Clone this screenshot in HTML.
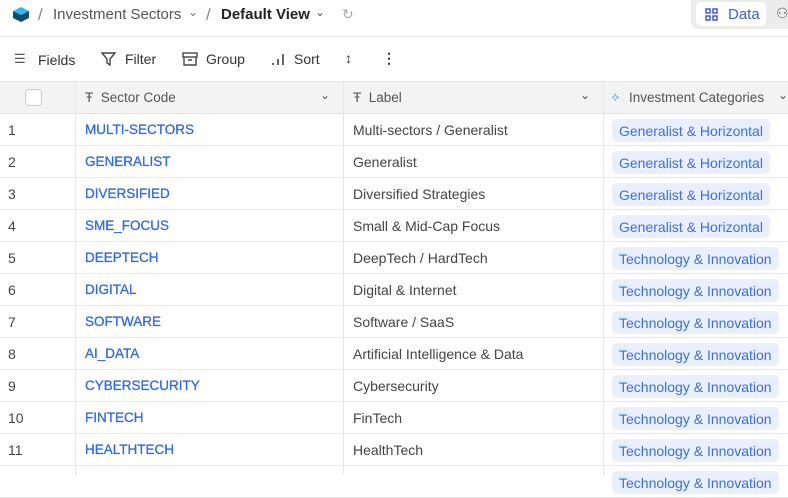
<!DOCTYPE html>
<html><head><meta charset="utf-8"><style>
*{box-sizing:border-box;margin:0;padding:0}
body{width:788px;height:475px;overflow:hidden;background:#fff;font-family:"Liberation Sans",sans-serif;color:#333;position:relative}
.top{position:absolute;left:0;top:0;width:788px;height:37px;border-bottom:1px solid #e6e6e6}
.t{position:absolute;white-space:nowrap}
.tb{position:absolute;top:37px;height:44px;width:788px}
.hdr{position:absolute;top:81px;left:0;width:788px;height:33px;background:#f3f3f4;border-top:1px solid #e3e3e3;border-bottom:1px solid #e3e3e3;font-size:13.5px;color:#555}
.row{position:absolute;left:0;width:788px;height:32px;border-bottom:1px solid #e8e8e8;font-size:14px}
.vl{position:absolute;top:81px;bottom:0;width:1px;background:#e6e6e6}
.num{position:absolute;left:8px;top:8px;color:#444}
.code{position:absolute;left:85px;top:8px;color:#2f6ae6;font-size:13.5px;-webkit-text-stroke:0.3px #2f6ae6}
.lab{position:absolute;left:353px;top:8px;color:#444}
.tag{position:absolute;left:612px;top:5px;height:23px;padding:4px 7px;background:#e8efff;color:#3d6fe0;border-radius:5px;font-size:14px;white-space:nowrap}
</style></head><body>
<div class="top">
<svg class="t" style="left:12px;top:6px" width="18" height="18" viewBox="0 0 18 18"><path d="M9 1 L17 5 L9 9 L1 5Z" fill="#33b8f0"/><path d="M1 5 L9 9 L17 5 L17 12 L9 16 L1 12Z" fill="#0d4f6e"/></svg>
<span class="t" style="left:38px;top:5px;font-size:17px;color:#888">/</span>
<span class="t" style="left:53px;top:6px;font-size:15px;color:#555">Investment Sectors</span>
<span class="t" style="left:188px;top:5px;font-size:12px;color:#777">⌄</span>
<span class="t" style="left:206px;top:5px;font-size:17px;color:#888">/</span>
<span class="t" style="left:221px;top:6px;font-size:15px;color:#222;font-weight:bold">Default View</span>
<span class="t" style="left:315px;top:5px;font-size:12px;color:#555">⌄</span>
<span class="t" style="left:342px;top:6px;font-size:14px;color:#aaa">↻</span>
<div class="t" style="left:691px;top:0;width:97px;height:29px;background:#ececec;border-radius:0 0 0 8px"></div>
<div class="t" style="left:696px;top:2px;width:70px;height:24px;background:#fff;border-radius:5px"></div>
<svg class="t" style="left:705px;top:8px" width="13" height="13" viewBox="0 0 13 13" fill="none" stroke="#3d5fd6" stroke-width="1.5"><rect x="1" y="1" width="4" height="4"/><rect x="8" y="1" width="4" height="4"/><rect x="1" y="8" width="4" height="4"/><rect x="8" y="8" width="4" height="4"/></svg>
<span class="t" style="left:728px;top:6px;font-size:15px;color:#3d5fd6">Data</span>
<span class="t" style="left:776px;top:5px;font-size:14px;color:#666">⚇</span>
</div>
<div class="tb">
<span class="t" style="left:14px;top:14px;font-size:13px;color:#555">☰</span>
<span class="t" style="left:38px;top:15px;font-size:14px">Fields</span>
<svg class="t" style="left:101px;top:15px" width="15" height="14" viewBox="0 0 15 14" fill="none" stroke="#444" stroke-width="1.4"><path d="M1 1H14L9 7V13L6 11V7Z"/></svg>
<span class="t" style="left:125px;top:14px;font-size:14px">Filter</span>
<svg class="t" style="left:182px;top:15px" width="16" height="14" viewBox="0 0 16 14" fill="none" stroke="#444" stroke-width="1.4"><rect x="1" y="1" width="14" height="4"/><path d="M2 5V13H14V5M6 8H10"/></svg>
<span class="t" style="left:206px;top:14px;font-size:14px">Group</span>
<svg class="t" style="left:271px;top:15px" width="14" height="14" viewBox="0 0 14 14" stroke="#444" stroke-width="1.6"><path d="M2 13V11M7 13V7M12 13V2"/></svg>
<span class="t" style="left:294px;top:14px;font-size:14px">Sort</span>
<span class="t" style="left:345px;top:13px;font-size:14px">↕</span>
<span class="t" style="left:382px;top:13px;font-size:14px;font-weight:bold">⋮</span>
</div>
<div class="hdr">
<div class="t" style="left:25px;top:7px;width:17px;height:17px;border:1px solid #ccc;border-radius:4px;background:#fff"></div>
<span class="t" style="left:85px;top:8px">Ŧ&nbsp; Sector Code</span>
<span class="t" style="left:320px;top:6px;font-size:12px">⌄</span>
<span class="t" style="left:353px;top:8px">Ŧ&nbsp; Label</span>
<span class="t" style="left:580px;top:6px;font-size:12px">⌄</span>
<span class="t" style="left:611px;top:7px;color:#3cb0e8;font-size:13px">⟡</span>
<span class="t" style="left:629px;top:8px">Investment Categories</span>
<span class="t" style="left:778px;top:6px;font-size:12px">⌄</span>
</div>
<div class="vl" style="left:75px"></div><div class="vl" style="left:343px"></div><div class="vl" style="left:603px"></div>
<div class="row" style="top:114px"><span class="num">1</span><span class="code">MULTI-SECTORS</span><span class="lab">Multi-sectors / Generalist</span><span class="tag">Generalist &amp; Horizontal</span></div>
<div class="row" style="top:146px"><span class="num">2</span><span class="code">GENERALIST</span><span class="lab">Generalist</span><span class="tag">Generalist &amp; Horizontal</span></div>
<div class="row" style="top:178px"><span class="num">3</span><span class="code">DIVERSIFIED</span><span class="lab">Diversified Strategies</span><span class="tag">Generalist &amp; Horizontal</span></div>
<div class="row" style="top:210px"><span class="num">4</span><span class="code">SME_FOCUS</span><span class="lab">Small &amp; Mid-Cap Focus</span><span class="tag">Generalist &amp; Horizontal</span></div>
<div class="row" style="top:242px"><span class="num">5</span><span class="code">DEEPTECH</span><span class="lab">DeepTech / HardTech</span><span class="tag">Technology &amp; Innovation</span></div>
<div class="row" style="top:274px"><span class="num">6</span><span class="code">DIGITAL</span><span class="lab">Digital &amp; Internet</span><span class="tag">Technology &amp; Innovation</span></div>
<div class="row" style="top:306px"><span class="num">7</span><span class="code">SOFTWARE</span><span class="lab">Software / SaaS</span><span class="tag">Technology &amp; Innovation</span></div>
<div class="row" style="top:338px"><span class="num">8</span><span class="code">AI_DATA</span><span class="lab">Artificial Intelligence &amp; Data</span><span class="tag">Technology &amp; Innovation</span></div>
<div class="row" style="top:370px"><span class="num">9</span><span class="code">CYBERSECURITY</span><span class="lab">Cybersecurity</span><span class="tag">Technology &amp; Innovation</span></div>
<div class="row" style="top:402px"><span class="num">10</span><span class="code">FINTECH</span><span class="lab">FinTech</span><span class="tag">Technology &amp; Innovation</span></div>
<div class="row" style="top:434px"><span class="num">11</span><span class="code">HEALTHTECH</span><span class="lab">HealthTech</span><span class="tag">Technology &amp; Innovation</span></div>
<div class="row" style="top:466px"><span class="tag">Technology &amp; Innovation</span></div>
</body></html>
